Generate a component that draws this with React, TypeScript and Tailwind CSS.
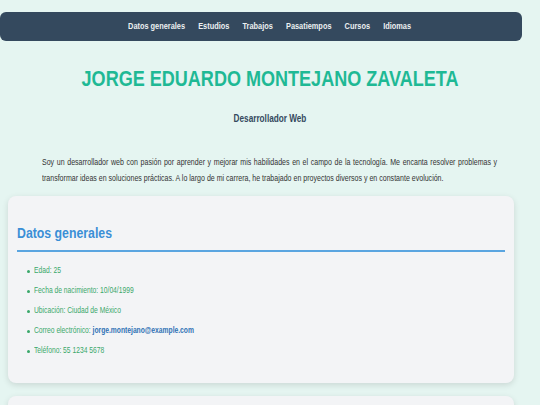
import React from 'react';

const font = { fontFamily: '"Liberation Sans", Arial, sans-serif' };

const navItems = ['Datos generales', 'Estudios', 'Trabajos', 'Pasatiempos', 'Cursos', 'Idiomas'];

const datos = [
  { label: 'Edad: 25' },
  { label: 'Fecha de nacimiento: 10/04/1999' },
  { label: 'Ubicación: Ciudad de México' },
  { label: 'Correo electrónico: ', email: 'jorge.montejano@example.com' },
  { label: 'Teléfono: 55 1234 5678' },
];

const App = () => {
  return (
    <div className="min-h-[405px] w-full overflow-hidden bg-[#e5f5f1] pt-3" style={font}>
      {/* Navegación */}
      <nav className="mr-[18px] flex h-[29px] items-center justify-center rounded-md bg-[#34495e] pl-[18px]">
        <div className="flex scale-x-[0.82] gap-[16px]">
          {navItems.map((item) => (
            <a key={item} className="text-[9px] font-bold text-[#ecf0f1]">
              {item}
            </a>
          ))}
        </div>
      </nav>

      {/* Encabezado */}
      <header className="text-center">
        <h1 className="mt-[25px] scale-x-[0.82] text-[22px] font-bold leading-[26px] text-[#1fb995]">
          JORGE EDUARDO MONTEJANO ZAVALETA
        </h1>
        <p className="mt-[21px] scale-x-[0.82] text-[10px] font-bold leading-[12px] text-[#34495e]">
          Desarrollador Web
        </p>
      </header>

      <div className="mt-[29px] ml-[42px] w-[555px] origin-left scale-x-[0.82] text-[8.6px] leading-[16px] text-[#333]">
        <p className="text-justify [text-align-last:justify]">
          Soy un desarrollador web con pasión por aprender y mejorar mis habilidades en el campo de la tecnología. Me
          encanta resolver problemas y
        </p>
        <p>
          transformar ideas en soluciones prácticas. A lo largo de mi carrera, he trabajado en proyectos diversos y en
          constante evolución.
        </p>
      </div>

      {/* Datos generales */}
      <section className="mt-[10px] mr-[26px] ml-2 rounded-lg bg-[#f3f4f6] px-[9px] pt-[28px] pb-[22px] shadow-[0_2px_6px_rgba(0,0,0,0.12)]">
        <h2 className="border-b-2 border-[#5aa5e0] pb-[8px] text-[15px] font-bold leading-[18px] text-[#3a8fd6]">
          <span className="inline-block origin-left scale-x-[0.82]">Datos generales</span>
        </h2>
        <ul className="mt-[9px]">
          {datos.map((d) => (
            <li key={d.label} className="flex h-[20px] items-center pl-[10px] text-[8.2px] text-[#3aa86a]">
              <span className="mr-[4px] h-[3px] w-[3px] rounded-full bg-[#3aa86a]" />
              <span className="origin-left scale-x-[0.82] whitespace-nowrap">
                {d.label}
                {d.email && <span className="font-bold text-[#2f72b5]">{d.email}</span>}
              </span>
            </li>
          ))}
        </ul>
      </section>

      <section className="mt-[13px] mr-[26px] ml-2 h-[60px] rounded-lg bg-[#f3f4f6] shadow-[0_2px_6px_rgba(0,0,0,0.12)]" />
    </div>
  );
};

export default App;
